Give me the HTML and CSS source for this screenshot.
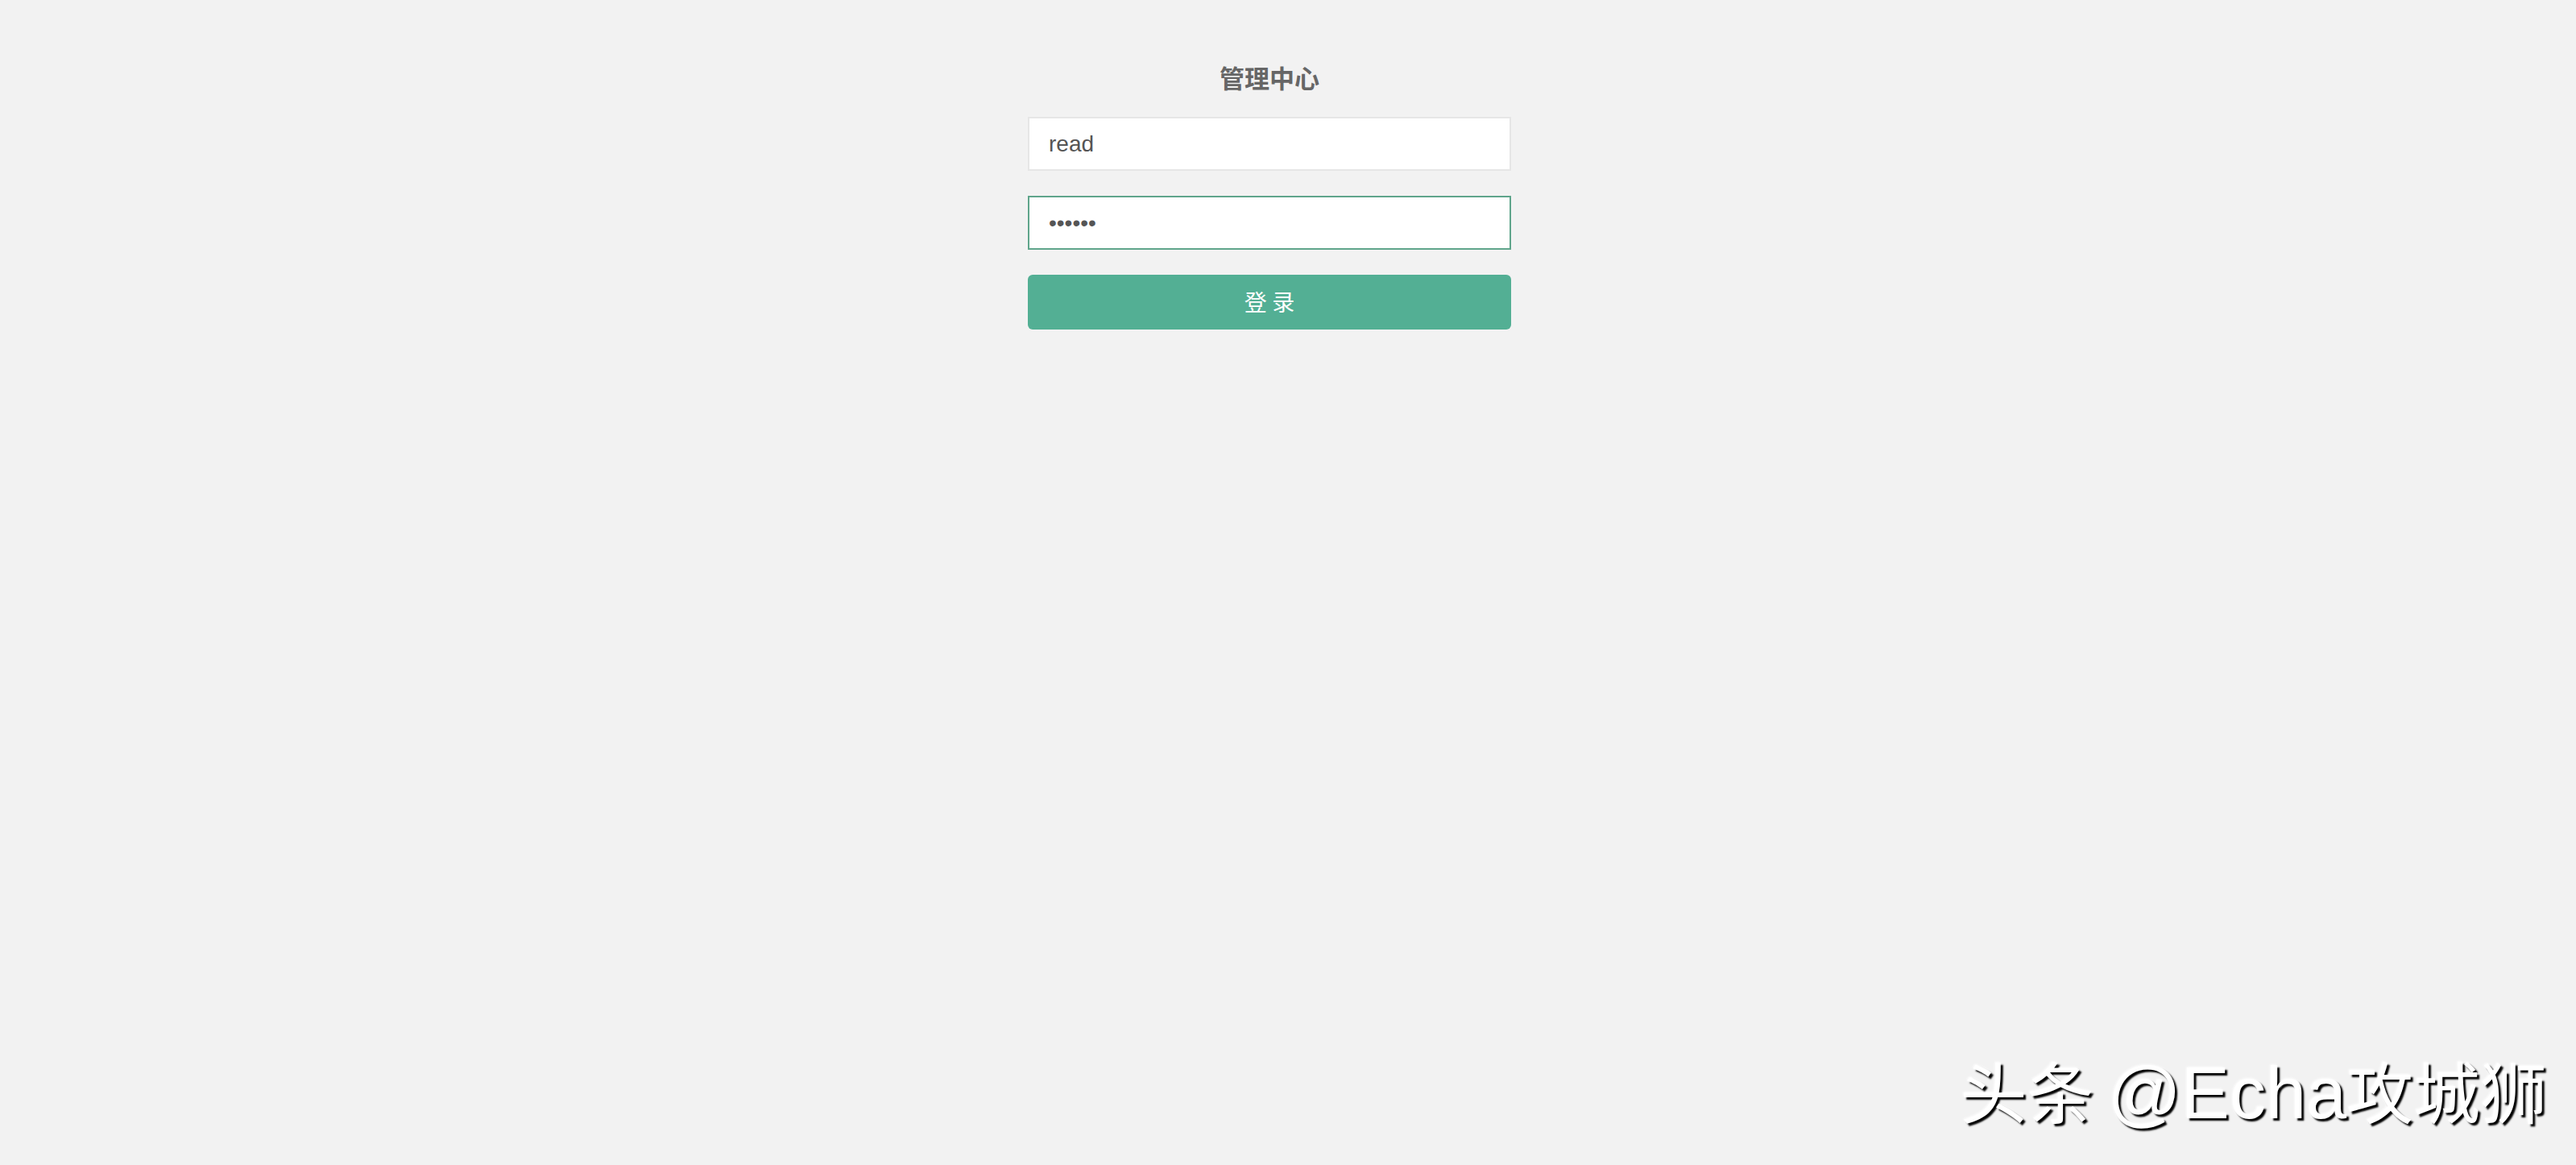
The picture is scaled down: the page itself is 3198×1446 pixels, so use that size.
FILE: index.html
```html
<!DOCTYPE html>
<html lang="zh-CN">
<head>
<meta charset="utf-8">
<title>管理中心</title>
<link rel="stylesheet" href="styles.css">
</head>
<body>
<div class="page">
  <form class="login">
    <h1 class="title">管理中心</h1>
    <input class="field" type="text" value="read">
    <input class="field field-focus" type="password" value="123456">
    <button class="submit" type="button">登 录</button>
  </form>
</div>
<div class="watermark">头条 <span class="wm-latin">@Echa</span>攻城狮</div>
</body>
</html>
```
FILE: styles.css
```css
html, body {
  margin: 0;
  padding: 0;
  background: #f2f2f2;
  height: 100%;
}
body {
  font-family: "Liberation Sans", "Noto Sans CJK SC", sans-serif;
  position: relative;
  overflow: hidden;
}
.page {
  padding: 76px 46px 0 0;
  display: flex;
  justify-content: center;
}
.login {
  width: 600px;
  display: flex;
  flex-direction: column;
  margin: 0;
}
.title {
  margin: 0 0 29px 0;
  font-family: "Noto Sans CJK SC", sans-serif;
  font-size: 31px;
  line-height: 40px;
  font-weight: 700;
  color: #666666;
  text-align: center;
}
.field {
  box-sizing: border-box;
  height: 67px;
  margin: 0 0 31px 0;
  padding: 0 24px;
  border: 2px solid #e6e6e6;
  background: #ffffff;
  font-family: "Liberation Sans", "Noto Sans CJK SC", sans-serif;
  font-size: 28px;
  color: #555555;
  outline: none;
  border-radius: 0;
}
.field-focus {
  border-color: #5fa58b;
}
.submit {
  box-sizing: border-box;
  height: 68px;
  border: none;
  border-radius: 6px;
  background: #53af94;
  color: #ffffff;
  font-family: "Noto Sans CJK SC", sans-serif;
  font-size: 28px;
  padding: 0 0 2px 0;
  cursor: pointer;
}
.watermark {
  position: absolute;
  top: 1308px;
  right: 36px;
  font-family: "Liberation Sans", "Noto Sans CJK SC", sans-serif;
  font-size: 83px;
  line-height: 1.1;
  color: #ffffff;
  white-space: nowrap;
  word-spacing: -6px;
  text-shadow: 3px 3px 2px rgba(0, 0, 0, 1), -1px -1px 3px rgba(255, 255, 255, 0.9);
}
.wm-latin {
  font-size: 90px;
}
```
